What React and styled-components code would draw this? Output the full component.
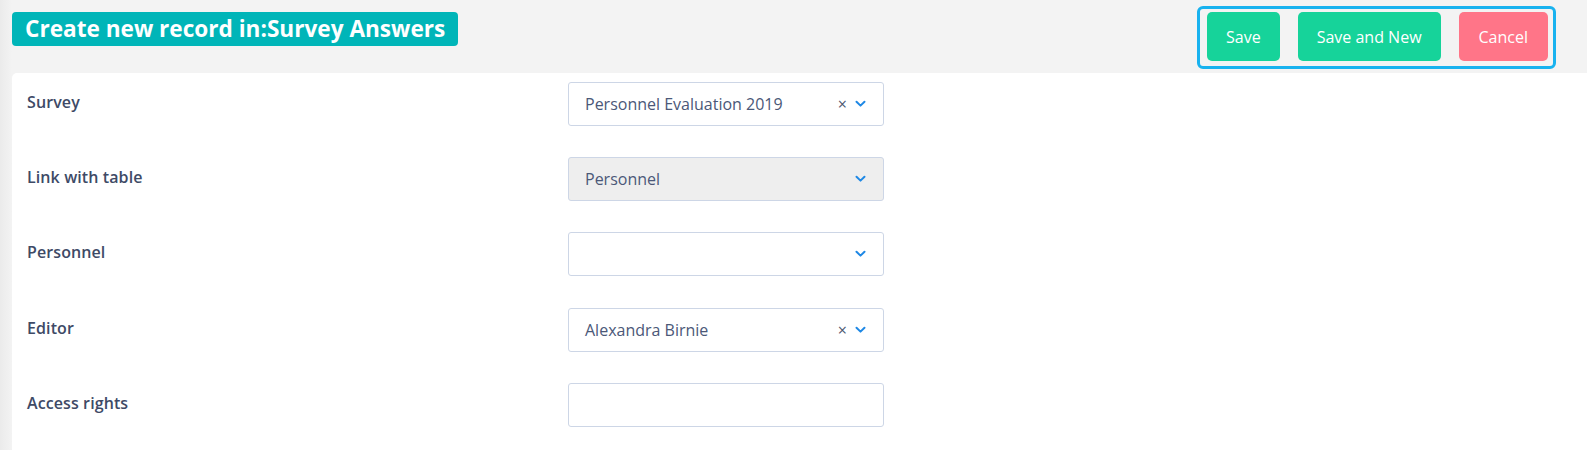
import React from "react"
import styled, { createGlobalStyle } from "styled-components"

const GlobalStyle = createGlobalStyle`
  html, body {
    margin: 0;
    padding: 0;
    background: #f3f3f3;
    font-family: "Open Sans", "Noto Sans", sans-serif;
    overflow: hidden;
  }
`

const Page = styled.div`
  display: flex;
  flex-direction: column;
  height: 100vh;
  background: linear-gradient(to right, #ebebeb 0px, #f3f3f3 12px);
  padding-left: 12px;
  box-sizing: border-box;
`

const Header = styled.div`
  display: flex;
  justify-content: space-between;
  align-items: flex-start;
  height: 73px;
  flex-shrink: 0;
`

const Title = styled.h1`
  margin: 12px 0 0 0;
  height: 34px;
  line-height: 34px;
  padding: 0 13px;
  background: #00b5b8;
  color: #fff;
  border-radius: 4px;
  font-size: 22.6px;
  font-weight: 700;
`

const ButtonGroup = styled.div`
  display: flex;
  gap: 18px;
  margin: 6px 31px 0 0;
  padding: 3px 5px 5px 7px;
  border: 3px solid #18b2ef;
  border-radius: 6px;
`

const Button = styled.button`
  height: 49px;
  padding: 0 ${(p) => p.$pad || 19}px;
  border: none;
  border-radius: 5px;
  background: ${(p) => (p.$danger ? "#ff7588" : "#16d39a")};
  color: #fff;
  font-family: inherit;
  font-size: 16px;
  cursor: pointer;
`

const Card = styled.div`
  flex: 1;
  background: #fff;
  border-top-left-radius: 5px;
  padding: 9px 0 0 15px;
  display: flex;
  flex-direction: column;
  gap: 31.2px;
`

const Row = styled.div`
  display: grid;
  grid-template-columns: 541px 316px;
  align-items: start;
`

const Label = styled.label`
  padding-top: 9px;
  font-size: 16px;
  font-weight: 600;
  letter-spacing: 0.1px;
  color: #3e4a66;
`

const Field = styled.div`
  height: 44px;
  box-sizing: border-box;
  border: 1px solid #cdd6e6;
  border-radius: 3px;
  background: ${(p) => (p.$disabled ? "#eeeeee" : "#fff")};
  display: flex;
  align-items: center;
  padding: 0 17px 0 16px;
  color: #4b5878;
  font-size: 16px;
`

const Value = styled.span`
  flex: 1;
`

const Clear = styled.span`
  color: #4b5570;
  font-size: 16px;
  margin-right: 8px;
  line-height: 1;
`

const Chevron = () => (
  <svg width="11" height="8" viewBox="0 0 11 8">
    <path d="M1.5 1.8 L5.5 5.6 L9.5 1.8" fill="none" stroke="#1e88e5" strokeWidth="2" strokeLinecap="round" strokeLinejoin="round" />
  </svg>
)

const rows = [
  { label: "Survey", value: "Personnel Evaluation 2019", clear: true, select: true },
  { label: "Link with table", value: "Personnel", select: true, disabled: true },
  { label: "Personnel", value: "", select: true },
  { label: "Editor", value: "Alexandra Birnie", clear: true, select: true },
  { label: "Access rights", value: "" },
]

export default function App() {
  return (
    <Page>
      <GlobalStyle />
      <Header>
        <Title>Create new record in:Survey Answers</Title>
        <ButtonGroup>
          <Button>Save</Button>
          <Button>Save and New</Button>
          <Button $danger $pad={20}>Cancel</Button>
        </ButtonGroup>
      </Header>
      <Card>
        {rows.map((r) => (
          <Row key={r.label}>
            <Label>{r.label}</Label>
            <Field $disabled={r.disabled}>
              <Value>{r.value}</Value>
              {r.clear && <Clear>×</Clear>}
              {r.select && <Chevron />}
            </Field>
          </Row>
        ))}
      </Card>
    </Page>
  )
}
